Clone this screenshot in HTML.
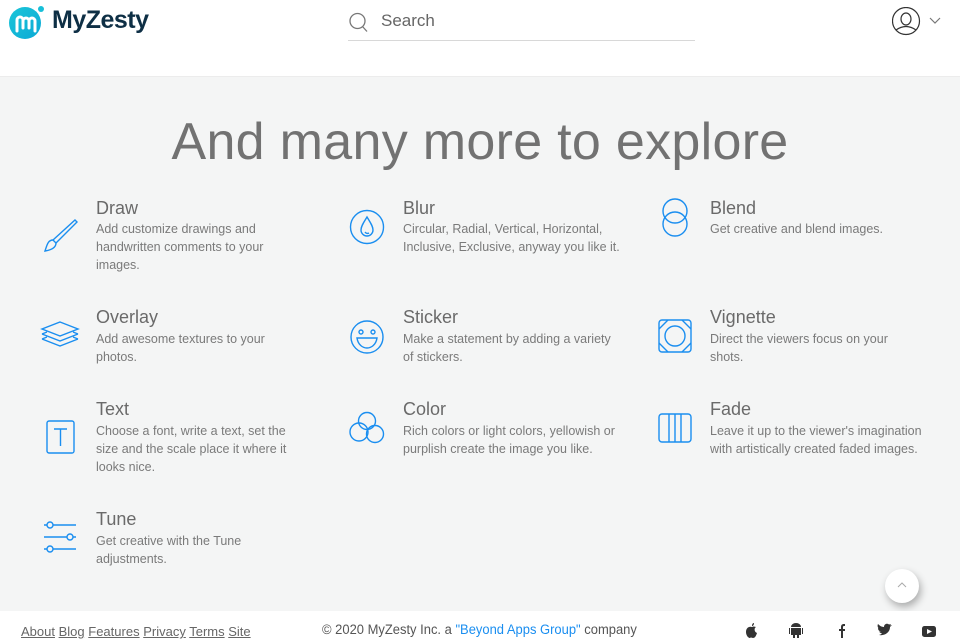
<!DOCTYPE html>
<html><head><meta charset="utf-8"><style>
*{margin:0;padding:0;box-sizing:border-box}
body{width:960px;height:640px;overflow:hidden;font-family:"Liberation Sans",sans-serif;background:#fff;position:relative}
.hdr{position:absolute;left:0;top:0;width:960px;height:77px;background:#fff;border-bottom:1px solid #ececec}
.main{position:absolute;left:0;top:77px;width:960px;height:534px;background:#f4f5f5}
h1{position:absolute;top:112px;left:0;width:960px;text-align:center;font-weight:normal;font-size:52px;color:#727272;letter-spacing:0.3px}
.it{position:absolute}
.it svg{position:absolute;left:0;top:0}
.it h3{position:absolute;font-weight:normal;font-size:18px;color:#6a6a6a;white-space:nowrap}
.it p{position:absolute;font-size:12.5px;line-height:18px;color:#7a7a7a;width:210px}
.ft{position:absolute;left:0;top:611px;width:960px;height:29px;background:#fff}
.ft a{color:#666;text-decoration:underline;font-size:13px}
</style></head><body>
<div class="hdr">
<svg style="position:absolute;left:8px;top:4px" width="38" height="36" viewBox="0 0 38 36">
<defs><linearGradient id="g" x1="0" y1="0" x2="1" y2="1"><stop offset="0" stop-color="#1cc6d8"/><stop offset="1" stop-color="#0aa9d6"/></linearGradient></defs>
<circle cx="17" cy="19" r="16" fill="url(#g)"/><circle cx="33" cy="5" r="3" fill="#17bfd8"/>
<path d="M9 27 V16 a3 3 0 0 1 6 0 V24 M15 17 a3 3 0 0 1 6 0 V24 M21 17 a3 3 0 0 1 6 0 V27" stroke="#fff" stroke-width="3" fill="none" stroke-linecap="round"/>
</svg>
<div style="position:absolute;left:52px;top:6px;font-size:25px;font-weight:bold;color:#0e2f45;letter-spacing:-0.5px">MyZesty</div>
<svg style="position:absolute;left:348px;top:12px" width="22" height="22" viewBox="0 0 22 22"><circle cx="9.5" cy="9" r="7.5" stroke="#777" stroke-width="1.3" fill="none"/><path d="M14.5 14.5 L19 19.5" stroke="#777" stroke-width="1.3"/></svg>
<div style="position:absolute;left:381px;top:11px;font-size:17px;color:#666">Search</div>
<div style="position:absolute;left:348px;top:40px;width:347px;height:1px;background:#d8d8d8"></div>
<svg style="position:absolute;left:892px;top:7px" width="52" height="30" viewBox="0 0 52 30"><circle cx="14" cy="14" r="13.5" stroke="#333" stroke-width="1.2" fill="none"/><ellipse cx="14" cy="12" rx="5" ry="6" stroke="#333" stroke-width="1.2" fill="none"/><path d="M4 23 Q14 16 24 23" stroke="#333" stroke-width="1.2" fill="none"/><path d="M38 11 L43 16 L48 11" stroke="#777" stroke-width="1.2" fill="none"/></svg>
</div>
<div class="main"></div>
<h1>And many more to explore</h1>

<div class="it" style="left:0;top:0">
<svg style="left:42px;top:218px" width="36" height="36" viewBox="0 0 36 36" fill="none" stroke="#1a8ef0" stroke-width="1.4"><path d="M33 2 L35 4 L14 25 L11 22 Z"/><path d="M11 22 C6 22 5 27 3 33 C9 32 14 30 14 25"/></svg>
<h3 style="left:96px;top:198px">Draw</h3>
<p style="left:96px;top:220px">Add customize drawings and handwritten comments to your images.</p>
<svg style="left:40px;top:320px" width="40" height="32" viewBox="0 0 40 32" fill="none" stroke="#1a8ef0" stroke-width="1.4"><path d="M20 2 L38 9 L20 16 L2 9 Z"/><path d="M2 14 L20 21 L38 14 M2 14 L7 12 M38 14 L33 12"/><path d="M2 19 L20 26 L38 19 M2 19 L7 17 M38 19 L33 17"/></svg>
<h3 style="left:96px;top:307px">Overlay</h3>
<p style="left:96px;top:330px">Add awesome textures to your photos.</p>
<svg style="left:46px;top:420px" width="30" height="34" viewBox="0 0 30 34" fill="none" stroke="#1a8ef0" stroke-width="1.4"><rect x="1" y="1" width="27" height="32" rx="2"/><path d="M8 9 H21 M14.5 9 V26"/></svg>
<h3 style="left:96px;top:399px">Text</h3>
<p style="left:96px;top:422px;width:200px">Choose a font, write a text, set the size and the scale place it where it looks nice.</p>
<svg style="left:42px;top:520px" width="36" height="36" viewBox="0 0 36 36" fill="none" stroke="#1a8ef0" stroke-width="1.4"><path d="M2 5 H34 M2 17 H34 M2 29 H34"/><circle cx="8" cy="5" r="3" fill="#f4f5f5"/><circle cx="28" cy="17" r="3" fill="#f4f5f5"/><circle cx="8" cy="29" r="3" fill="#f4f5f5"/></svg>
<h3 style="left:96px;top:509px">Tune</h3>
<p style="left:96px;top:532px">Get creative with the Tune adjustments.</p>
</div>

<div class="it" style="left:0;top:0">
<svg style="left:349px;top:209px" width="36" height="36" viewBox="0 0 36 36" fill="none" stroke="#1a8ef0" stroke-width="1.4"><circle cx="18" cy="18" r="16.5"/><path d="M18 8 C15 13 12 17 12 21 A6 6 0 0 0 24 21 C24 17 21 13 18 8 Z"/><path d="M16 23 A3 3 0 0 0 20 24"/></svg>
<h3 style="left:403px;top:198px">Blur</h3>
<p style="left:403px;top:220px;width:230px">Circular, Radial, Vertical, Horizontal, Inclusive, Exclusive, anyway you like it.</p>
<svg style="left:349px;top:319px" width="36" height="36" viewBox="0 0 36 36" fill="none" stroke="#1a8ef0" stroke-width="1.4"><circle cx="18" cy="18" r="16"/><circle cx="12" cy="13" r="2"/><circle cx="24" cy="13" r="2"/><path d="M8 19 H28 C27 26 22 29 18 29 C14 29 9 26 8 19 Z"/></svg>
<h3 style="left:403px;top:307px">Sticker</h3>
<p style="left:403px;top:330px;width:220px">Make a statement by adding a variety of stickers.</p>
<svg style="left:349px;top:411px" width="36" height="34" viewBox="0 0 36 34" fill="none" stroke="#1a8ef0" stroke-width="1.4"><circle cx="18" cy="10" r="8.5"/><circle cx="10" cy="21" r="9"/><circle cx="26" cy="23" r="8.5"/></svg>
<h3 style="left:403px;top:399px">Color</h3>
<p style="left:403px;top:422px;width:220px">Rich colors or light colors, yellowish or purplish create the image you like.</p>
</div>

<div class="it" style="left:0;top:0">
<svg style="left:660px;top:197px" width="30" height="42" viewBox="0 0 30 42" fill="none" stroke="#1a8ef0" stroke-width="1.4"><circle cx="15" cy="14" r="12"/><circle cx="15" cy="27" r="12"/></svg>
<h3 style="left:710px;top:198px">Blend</h3>
<p style="left:710px;top:220px;width:230px">Get creative and blend images.</p>
<svg style="left:658px;top:319px" width="34" height="34" viewBox="0 0 34 34" fill="none" stroke="#1a8ef0" stroke-width="1.4"><rect x="1" y="1" width="32" height="32" rx="3"/><circle cx="17" cy="17" r="10"/><path d="M1 10 L10 1 M24 1 L33 10 M33 24 L24 33 M10 33 L1 24"/></svg>
<h3 style="left:710px;top:307px">Vignette</h3>
<p style="left:710px;top:330px;width:210px">Direct the viewers focus on your shots.</p>
<svg style="left:658px;top:413px" width="34" height="30" viewBox="0 0 34 30" fill="none" stroke="#1a8ef0" stroke-width="1.4"><rect x="1" y="1" width="32" height="28" rx="3"/><path d="M11 1 V29 M17 1 V29 M23 1 V29"/></svg>
<h3 style="left:710px;top:399px">Fade</h3>
<p style="left:710px;top:422px;width:230px">Leave it up to the viewer's imagination with artistically created faded images.</p>
</div>

<div style="position:absolute;left:885px;top:569px;width:34px;height:34px;border-radius:50%;background:#fff;box-shadow:2px 4px 8px rgba(0,0,0,.3)"><svg style="position:absolute;left:11px;top:12px" width="12" height="8" viewBox="0 0 12 8"><path d="M2 6 L6 2 L10 6" stroke="#aaa" fill="none" stroke-width="1"/></svg></div>

<div class="ft">
<div style="position:absolute;left:21px;top:13px;white-space:nowrap;font-size:13px;word-spacing:0px"><a>About</a> <a>Blog</a> <a>Features</a> <a>Privacy</a> <a>Terms</a> <a>Site</a></div>
<div style="position:absolute;left:322px;top:11px;font-size:13.5px;color:#555;white-space:nowrap;transform:scaleX(0.96);transform-origin:left">© 2020 MyZesty Inc. a <span style="color:#1a8ef0">"Beyond Apps Group"</span> company</div>
<svg style="position:absolute;left:744px;top:12px" width="195" height="16" viewBox="0 0 195 16" fill="#333">
<path d="M8 4 C10 3 11 4 12 4 C10 5 10 9 13 10 C12 13 11 15 9 15 C8 15 7 14 6 15 C4 15 2 12 2 9 C2 5 5 3 8 4 Z M8 3 C8 1 9 0 10 0 C10 2 9 3 8 3 Z"/>
<path d="M47 5 H57 V12 H47 Z M47 4 A5 4 0 0 1 57 4 Z M45 5 H46 V11 H45 Z M58 5 H59 V11 H58 Z M49 12 H51 V15 H49 Z M53 12 H55 V15 H53 Z"/>
<path d="M97 15 V8 H95 V6 H97 V4 C97 2 98 1 100 1 H101 V3 H100 C99 3 99 4 99 4 V6 H101 L101 8 H99 V15 Z"/>
<path d="M135 12 C140 13 146 10 146 4 L148 2 L146 2.5 L147 1 L145 1.5 C143 0 140 1 140 4 C137 4 135 2 134 1 C133 3 134 5 135 5.5 L134 5 C134 7 135 8 137 8.5 L135 8.5 C136 10 137 10 138 10.5 C137 11.5 135 12 135 12 Z"/>
<rect x="178" y="3" width="14" height="11" rx="2.5"/><path d="M183 6 L188 8.5 L183 11 Z" fill="#fff"/>
</svg>
</div>
</body></html>
